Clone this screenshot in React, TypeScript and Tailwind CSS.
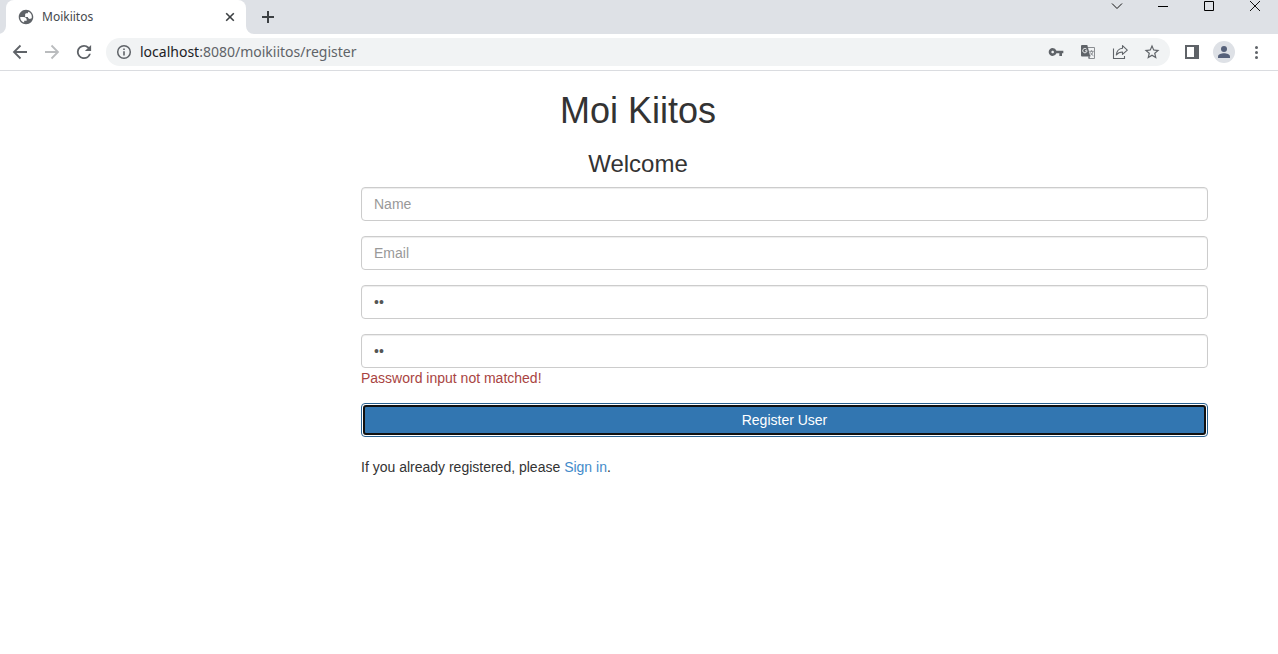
import { useState, type ReactNode } from "react";

const chromeFont = "font-['Noto_Sans','Open_Sans',sans-serif]";

function ToolButton({ label, children }: { label: string; children: ReactNode }) {
  return (
    <button type="button" aria-label={label} className="flex size-6 shrink-0 items-center justify-center rounded-full">
      {children}
    </button>
  );
}

function WindowButton({ label, children }: { label: string; children: ReactNode }) {
  return (
    <button type="button" aria-label={label} className="flex h-3 w-[46px] items-center justify-center">
      {children}
    </button>
  );
}

function TabStrip() {
  return (
    <div className="flex items-start bg-[#dee1e6] pl-1.5">
      <div className="relative flex h-[34px] w-60 items-center rounded-t-lg bg-white pr-1.5 pl-3">
        <svg viewBox="0 0 8 8" className="absolute bottom-0 -left-2 size-2" fill="#fff" aria-hidden="true">
          <path d="M8 0v8H0a8 8 0 0 0 8-8z" />
        </svg>
        <svg viewBox="0 0 8 8" className="absolute -right-2 bottom-0 size-2" fill="#fff" aria-hidden="true">
          <path d="M0 0v8h8a8 8 0 0 1-8-8z" />
        </svg>
        <svg viewBox="1 1 22 22" className="size-4 shrink-0" fill="#5f6368" aria-hidden="true">
          <path d="M12 2C6.48 2 2 6.48 2 12s4.48 10 10 10 10-4.48 10-10S17.52 2 12 2zM4 12h4.400c3.407.022 4.922 1.730 4.543 5.127H9.488v2.470A8.004 8.004 0 0 1 4 12zm16 0c0 .5-.05 1-.14 1.480-.86 1-1.500 1.100-2.400 1.100-1.900 0-2.860-.8-2.860-2.500h-3.800v-3.200c0-1.400.7-2.100 2.100-2.100h1.600c0-1 .4-1.700 1.100-2.100A8 8 0 0 1 20 12z" />
        </svg>
        <span className={`${chromeFont} ml-2 flex-1 text-xs text-[#45494d]`}>Moikiitos</span>
        <button type="button" aria-label="Close tab" className="flex size-5 items-center justify-center">
          <svg viewBox="0 0 10 10" className="size-2.5" stroke="#3c4043" strokeWidth="1.6" aria-hidden="true">
            <path d="M1.200 1.200l7.600 7.600M8.800 1.200L1.200 8.800" />
          </svg>
        </button>
      </div>
      <button type="button" aria-label="New tab" className="ml-3 flex h-[34px] w-5 items-center justify-center">
        <svg viewBox="0 0 12 12" className="size-3" stroke="#3c4043" strokeWidth="2" aria-hidden="true">
          <path d="M6 0v12M0 6h12" />
        </svg>
      </button>
      <div className="ml-auto flex">
        <WindowButton label="Search tabs">
          <svg viewBox="0 0 12 12" className="size-3" fill="none" stroke="#111" aria-hidden="true">
            <path d="M1 3.500l5 5 5-5" />
          </svg>
        </WindowButton>
        <WindowButton label="Minimize">
          <svg viewBox="0 0 12 12" className="size-3" fill="none" stroke="#000" aria-hidden="true">
            <path d="M1 6.500h10" />
          </svg>
        </WindowButton>
        <WindowButton label="Maximize">
          <svg viewBox="0 0 12 12" className="size-3" fill="none" stroke="#000" aria-hidden="true">
            <path d="M1.500 1.500h9v9h-9z" />
          </svg>
        </WindowButton>
        <WindowButton label="Close window">
          <svg viewBox="0 0 12 12" className="size-3" fill="none" stroke="#111" aria-hidden="true">
            <path d="M1 1l10 10M11 1L1 11" />
          </svg>
        </WindowButton>
      </div>
    </div>
  );
}

function Toolbar() {
  return (
    <div className="flex h-[37px] items-center border-b border-[#dadce0] bg-white pr-2.5 pl-2">
      <div className="flex gap-2">
        <ToolButton label="Back">
          <svg viewBox="0 0 16 16" className="size-4" fill="none" stroke="#5f6368" strokeWidth="1.8" aria-hidden="true">
            <path d="M15 8H2.500M8.500 1.500L2 8l6.500 6.500" />
          </svg>
        </ToolButton>
        <ToolButton label="Forward">
          <svg viewBox="0 0 16 16" className="size-4" fill="none" stroke="#babcbe" strokeWidth="1.8" aria-hidden="true">
            <path d="M1 8h12.500M7.500 1.500L14 8l-6.500 6.500" />
          </svg>
        </ToolButton>
        <ToolButton label="Reload">
          <svg viewBox="3 3 18 18" className="size-4" fill="#5f6368" aria-hidden="true">
            <path d="M17.650 6.350A7.958 7.958 0 0 0 12 4a8 8 0 1 0 7.730 10h-2.080A5.990 5.990 0 0 1 12 18a6 6 0 1 1 0-12c1.660 0 3.140.690 4.220 1.780L13 11h7V4l-2.350 2.350z" />
          </svg>
        </ToolButton>
      </div>

      <div className="mx-2.5 flex h-7 flex-1 items-center rounded-full bg-[#f1f3f4] px-1.5">
        <ToolButton label="View site information">
          <svg viewBox="0 0 16 16" className="size-4" aria-hidden="true">
            <circle cx="8" cy="8" r="6.300" fill="none" stroke="#5f6368" strokeWidth="1.500" />
            <path d="M7.200 7.200h1.600v4.300H7.200zM7.200 4.500h1.600v1.600H7.200z" fill="#5f6368" />
          </svg>
        </ToolButton>
        <div className={`${chromeFont} ml-1 flex-1 text-sm text-[#5f6368]`}>
          <span className="text-[#202124]">localhost</span>:8080/moikiitos/register
        </div>
        <div className="flex gap-2">
          <ToolButton label="Manage passwords">
            <svg viewBox="0 0 24 24" className="size-4" fill="#5f6368" aria-hidden="true">
              <path d="M12.650 10A5.990 5.990 0 0 0 7 6c-3.310 0-6 2.690-6 6s2.690 6 6 6a5.990 5.990 0 0 0 5.650-4H17v4h4v-4h2v-4H12.650zM7 14c-1.100 0-2-.9-2-2s.9-2 2-2 2 .9 2 2-.9 2-2 2z" />
            </svg>
          </ToolButton>
          <ToolButton label="Translate this page">
            <svg viewBox="0 0 16 16" className="size-4" aria-hidden="true">
              <path d="M7.500 3.500h7v11H8.800" fill="none" stroke="#8b8e92" />
              <path d="M2 1h5.300l3 11.500H2a1 1 0 0 1-1-1V2a1 1 0 0 1 1-1z" fill="#5f6368" />
              <path d="M8 12.500h2.300L8.800 15z" fill="#5f6368" />
              <path d="M6.600 5.200a2.200 2.200 0 1 0 .5 1.600H5" fill="none" stroke="#f1f3f4" strokeWidth="1" />
              <path d="M9.300 7.300h4.400M11.500 6.300v1M12.900 7.500c-.3 1.800-1.300 3-2.500 3.800M10.500 8.500c.5 1.300 1.500 2.300 2.900 3.200" fill="none" stroke="#7b7e83" strokeWidth=".9" />
            </svg>
          </ToolButton>
          <ToolButton label="Share this page">
            <svg viewBox="0 0 16 16" className="size-4" fill="none" stroke="#5f6368" strokeWidth="1.100" aria-hidden="true">
              <path d="M1.500 4.500v10h11V12" />
              <path d="M10.500 1.600l4.800 4.500-4.800 4.300V8c-2.800 0-4.700 1-6.200 3 .3-3.700 2.700-6.400 6.200-6.800z" strokeLinejoin="round" />
            </svg>
          </ToolButton>
          <ToolButton label="Bookmark this tab">
            <svg viewBox="0 0 24 24" className="size-[18px]" fill="#5f6368" aria-hidden="true">
              <path d="M22 9.240l-7.190-.620L12 2 9.190 8.630 2 9.240l5.460 4.730L5.820 21 12 17.270 18.180 21l-1.630-7.030L22 9.240zM12 15.400l-3.760 2.270 1-4.280-3.320-2.880 4.380-.380L12 6.100l1.710 4.040 4.380.380-3.320 2.880 1 4.280L12 15.400z" />
            </svg>
          </ToolButton>
        </div>
      </div>

      <div className="flex gap-2">
        <ToolButton label="Side panel">
          <svg viewBox="0 0 14 14" className="size-3.5" aria-hidden="true">
            <path d="M0 0h14v14H0z" fill="#5f6368" />
            <path d="M2 2h7v10H2z" fill="#fff" />
          </svg>
        </ToolButton>
        <ToolButton label="Profile">
          <svg viewBox="0 0 22 22" className="size-[22px]" aria-hidden="true">
            <circle cx="11" cy="11" r="11" fill="#dee1e6" />
            <circle cx="11" cy="8" r="3" fill="#56617a" />
            <path d="M5 17v-1.500c0-2 3.500-3.200 6-3.200s6 1.200 6 3.200V17z" fill="#56617a" />
          </svg>
        </ToolButton>
        <ToolButton label="Customize and control">
          <svg viewBox="0 0 4 14" className="h-3.5 w-1" fill="#5f6368" aria-hidden="true">
            <circle cx="2.500" cy="2.500" r="1.500" />
            <circle cx="2.500" cy="7.500" r="1.500" />
            <circle cx="2.500" cy="12.500" r="1.500" />
          </svg>
        </ToolButton>
      </div>
    </div>
  );
}

type FieldProps = {
  label: string;
  type: "text" | "email" | "password";
  value: string;
  onChange: (value: string) => void;
  placeholder?: string;
};

function Field({ label, type, value, onChange, placeholder }: FieldProps) {
  return (
    <input
      type={type}
      aria-label={label}
      placeholder={placeholder}
      value={value}
      onChange={(event) => onChange(event.target.value)}
      className="block h-[34px] w-full rounded border border-[#ccc] bg-white px-3 py-1.5 text-sm text-[#555] shadow-[inset_0_1px_1px_rgba(0,0,0,0.075)] outline-none placeholder:text-[#999]"
    />
  );
}

function RegisterPage() {
  const [name, setName] = useState("");
  const [email, setEmail] = useState("");
  const [password, setPassword] = useState("ab");
  const [confirmation, setConfirmation] = useState("cd");

  return (
    <main className="mx-auto max-w-[1170px] pt-5 pr-4 pl-3.5 font-['Liberation_Sans',Arial,sans-serif] text-sm text-[#333]">
      <h1 className="text-center text-4xl leading-10">Moi Kiitos</h1>
      <h3 className="mt-5 text-center text-2xl leading-[26px]">Welcome</h3>
      <form className="mt-2.5 ml-auto w-full md:w-[calc(75%-8px)]" onSubmit={(event) => event.preventDefault()}>
        <div className="flex flex-col gap-[15px]">
          <Field label="Name" type="text" placeholder="Name" value={name} onChange={setName} />
          <Field label="Email" type="email" placeholder="Email" value={email} onChange={setEmail} />
          <Field label="Password" type="password" value={password} onChange={setPassword} />
          <div>
            <Field label="Confirm password" type="password" value={confirmation} onChange={setConfirmation} />
            {password !== confirmation && (
              <p role="alert" className="text-[#a94442]">
                Password input not matched!
              </p>
            )}
          </div>
          <button
            type="submit"
            className="h-[34px] w-full rounded border border-[#286090] bg-white p-px text-white"
          >
            <span className="flex h-full items-center justify-center rounded-[3px] border-2 border-[#101010] bg-[#3276b1]">
              Register User
            </span>
          </button>
        </div>
        <p className="mt-5">
          If you already registered, please{" "}
          <a href="#signin" className="text-[#428bca]">
            Sign in
          </a>
          .
        </p>
      </form>
    </main>
  );
}

export default function App() {
  return (
    <div className="min-h-screen bg-white">
      <header>
        <TabStrip />
        <Toolbar />
      </header>
      <RegisterPage />
    </div>
  );
}
